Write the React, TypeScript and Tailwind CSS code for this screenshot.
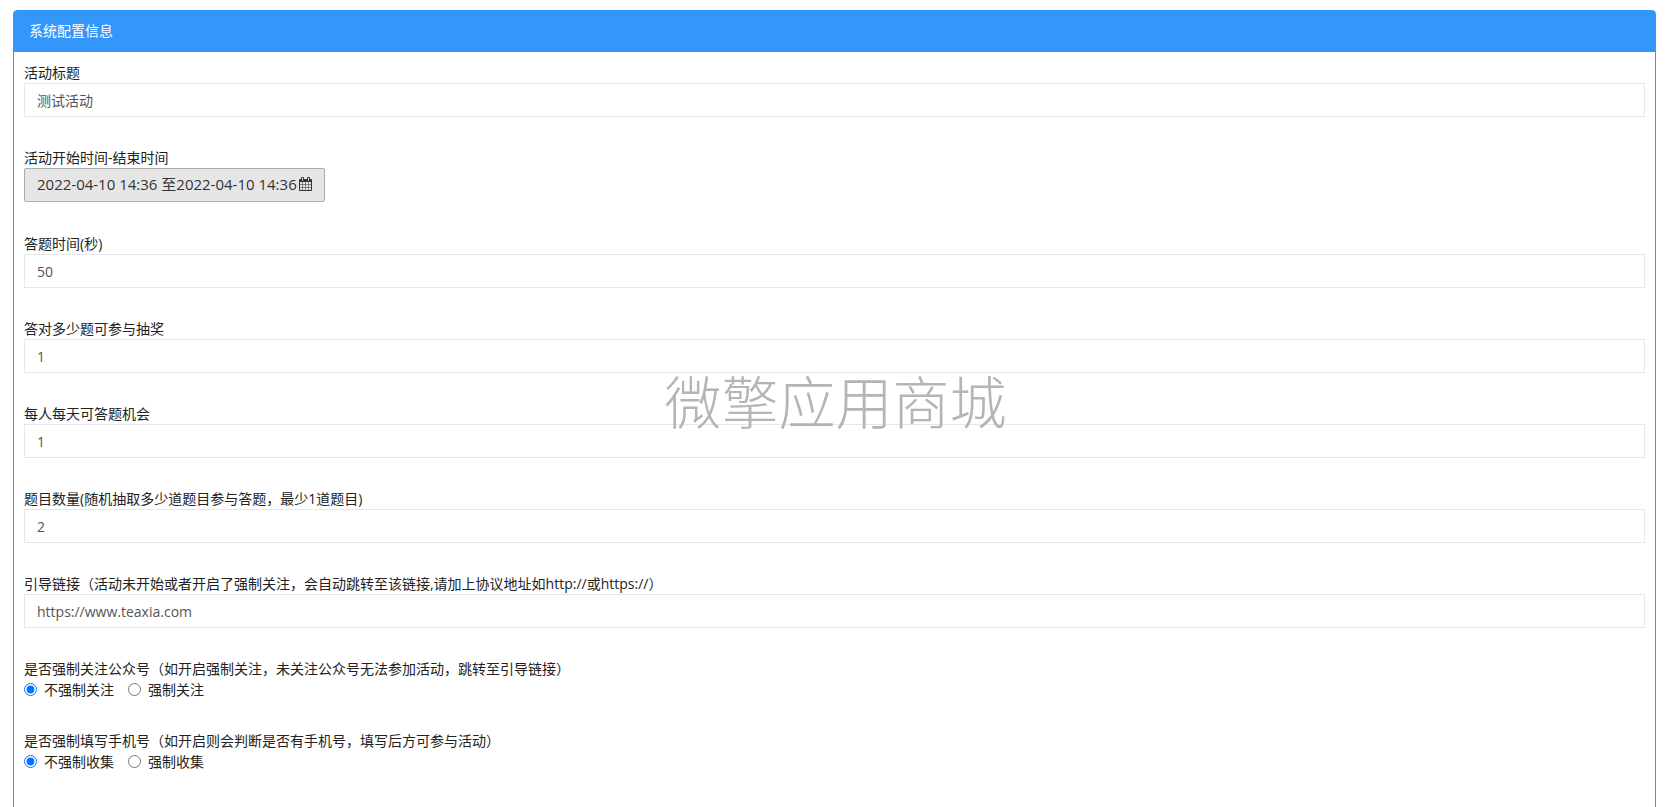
import { useState } from "react";

interface TextField {
  id: string;
  label: string;
  value: string;
}

interface RadioField {
  name: string;
  label: string;
  options: string[];
}

const titleField: TextField = { id: "title", label: "活动标题", value: "测试活动" };

const textFields: TextField[] = [
  { id: "answer-time", label: "答题时间(秒)", value: "50" },
  { id: "right-count", label: "答对多少题可参与抽奖", value: "1" },
  { id: "daily-chance", label: "每人每天可答题机会", value: "1" },
  { id: "question-count", label: "题目数量(随机抽取多少道题目参与答题，最少1道题目)", value: "2" },
  {
    id: "guide-url",
    label: "引导链接（活动未开始或者开启了强制关注，会自动跳转至该链接,请加上协议地址如http://或https://）",
    value: "https://www.teaxia.com",
  },
];

const radioFields: RadioField[] = [
  {
    name: "follow",
    label: "是否强制关注公众号（如开启强制关注，未关注公众号无法参加活动，跳转至引导链接）",
    options: ["不强制关注", "强制关注"],
  },
  {
    name: "mobile",
    label: "是否强制填写手机号（如开启则会判断是否有手机号，填写后方可参与活动）",
    options: ["不强制收集", "强制收集"],
  },
];

function CalendarIcon() {
  return (
    <svg viewBox="64 0 1664 1792" className="h-[14px] w-[13px]" fill="currentColor" aria-hidden="true">
      <path d="M192 1664h288v-288h-288v288zm352 0h320v-288h-320v288zm-352-352h288v-320h-288v320zm352 0h320v-320h-320v320zm-352-384h288v-288h-288v288zm736 736h320v-288h-320v288zm-384-736h320v-288h-320v288zm768 736h288v-288h-288v288zm-384-352h320v-320h-320v320zm-352-864v-288q0-13-9.5-22.5t-22.5-9.5h-64q-13 0-22.5 9.5t-9.5 22.5v288q0 13 9.5 22.5t22.5 9.5h64q13 0 22.5-9.5t9.5-22.5zm736 864h288v-320h-288v320zm-384-384h320v-288h-320v288zm384 0h288v-288h-288v288zm32-480v-288q0-13-9.5-22.5t-22.5-9.5h-64q-13 0-22.5 9.5t-9.5 22.5v288q0 13 9.5 22.5t22.5 9.5h64q13 0 22.5-9.5t9.5-22.5zm384-64v1280q0 52-38 90t-90 38h-1408q-52 0-90-38t-38-90v-1280q0-52 38-90t90-38h128v-96q0-66 47-113t113-47h64q66 0 113 47t47 113v96h384v-96q0-66 47-113t113-47h64q66 0 113 47t47 113v96h128q52 0 90 38t38 90z" />
    </svg>
  );
}

function TextInput({ field }: { field: TextField }) {
  return (
    <div>
      <label htmlFor={field.id} className="block">
        {field.label}
      </label>
      <input
        id={field.id}
        type="text"
        defaultValue={field.value}
        className="block h-[34px] w-full border border-[#e7e7eb] bg-white px-3 text-[#555555] outline-none focus:border-[#3296fa]"
      />
    </div>
  );
}

function RadioGroup({ field }: { field: RadioField }) {
  const [selected, setSelected] = useState(field.options[0]);

  return (
    <fieldset>
      <legend>{field.label}</legend>
      <div className="flex gap-[14px]">
        {field.options.map((option) => (
          <label key={option} className="flex items-center gap-[7px]">
            <input
              type="radio"
              name={field.name}
              checked={selected === option}
              onChange={() => setSelected(option)}
              className="size-[13px]"
            />
            {option}
          </label>
        ))}
      </div>
    </fieldset>
  );
}

export default function App() {
  return (
    <div className="h-screen overflow-hidden bg-white pt-[10px] pr-[15px] pl-[13px] font-['Open_Sans','Noto_Sans_CJK_SC',sans-serif] text-[14px] leading-[21px] text-[#222222]">
      <section className="min-h-screen rounded-t-[4px] border border-[#3296fa]">
        <h1 className="bg-[#3296fa] px-[15px] pt-[9px] pb-[11px] text-white">系统配置信息</h1>

        <form className="flex flex-col gap-[30px] p-[10px]">
          <TextInput field={titleField} />

          <div className="pb-px">
            <label htmlFor="date-range" className="block">
              活动开始时间-结束时间
            </label>
            <button
              id="date-range"
              type="button"
              className="flex h-[34px] items-center gap-[2px] rounded-[2px] border border-[#adadad] bg-[#e6e6e6] px-3 pb-[2px] text-[15px] text-[#333333]"
            >
              <span>2022-04-10 14:36 至2022-04-10 14:36</span>
              <CalendarIcon />
            </button>
          </div>

          {textFields.map((field) => (
            <TextInput key={field.id} field={field} />
          ))}

          {radioFields.map((field) => (
            <RadioGroup key={field.name} field={field} />
          ))}
        </form>
      </section>

      {/* Watermark */}
      <div className="pointer-events-none fixed inset-0 flex items-center justify-center pb-2 font-['Noto_Sans_CJK_SC',sans-serif] text-[57px] leading-none font-light text-[#b5b5b5]">
        微擎应用商城
      </div>
    </div>
  );
}
